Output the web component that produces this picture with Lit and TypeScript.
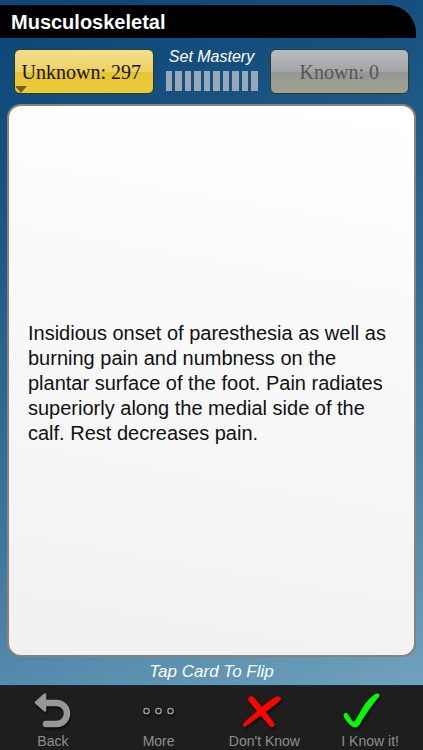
import { LitElement, html, css, svg } from "lit";
import { customElement, property } from "lit/decorators.js";

const backIcon = svg`
  <path d="M7 9.500 L16 1.500 V17.500 Z" fill="#979797" stroke="#979797" stroke-width="2.500" stroke-linejoin="round"/>
  <path d="M15 10 H27.500 A10.500 10.500 0 0 1 27.500 31 H17" fill="none" stroke="#979797" stroke-width="6.500" stroke-linecap="round"/>`;
const moreIcon = svg`
  <g fill="none" stroke="#a0a0a0" stroke-width="1.300">
    <circle cx="11.500" cy="18" r="2.700"/><circle cx="23.500" cy="18" r="2.700"/><circle cx="35.500" cy="18" r="2.700"/>
  </g>`;
const crossIcon = svg`
  <g fill="#fb0500" stroke="#fb0500" stroke-width="1" stroke-linejoin="round">
    <path d="M10 4 C12 3 13 4 14.500 5.500 L23 16 L34 30.500 C35 33 33 34.500 30.500 33.500 L19 20 L9.500 8.500 C8 6.500 8 5 10 4 Z"/>
    <path d="M37 4 C40 3 41.500 5.500 39.500 8 L25 19 L5 33.500 C3 34.500 3 31 4.500 29.500 L19 17 C27 10 32 6 37 4 Z"/>
  </g>`;
const checkIcon = svg`
  <path d="M1.500 20.500 C-1 19 -3.500 21 -2 24 C0 28 4 32.500 7 34 C10 35 12 34 14 31 C19 22 26 12 32 5 C35 2 33 0 31 0.500 C27 1.500 22 7 19 11 C15 17 12 23 9 28 Q7.500 29.500 6 27.500 Z" fill="#08f808"/>`;

@customElement("tab-item")
class TabItem extends LitElement {
  @property() label = "";
  @property({ attribute: false }) icon: unknown;

  static styles = css`
    :host { display: block; flex: 1; }
    button {
      width: 100%;
      display: flex;
      flex-direction: column;
      align-items: center;
      gap: 4px;
      padding: 7px 0 1px;
      border: 0;
      background: none;
      color: #8e8e8e;
      font: 14px/16px "Liberation Sans", Arial, sans-serif;
      white-space: nowrap;
      cursor: pointer;
    }
    svg { display: block; overflow: visible; filter: drop-shadow(1px 2px 1px #000a); }
  `;

  render() {
    return html`<button type="button">
      <svg width="48" height="36" viewBox="0 0 48 36" aria-hidden="true">${this.icon}</svg>
      <span>${this.label}</span>
    </button>`;
  }
}

@customElement("app-root")
class AppRoot extends LitElement {
  static styles = css`
    :host {
      display: flex;
      flex-direction: column;
      min-height: 100vh;
      box-sizing: border-box;
      padding-top: 5px;
      background: linear-gradient(160deg, #0d4677 0%, #15507f 18%, #3f789f 62%, #74a7c0 96%);
      font-family: "Liberation Sans", Arial, sans-serif;
    }
    button { margin: 0; font: inherit; cursor: pointer; }
    header {
      margin-right: 7px;
      padding: 2px 11px 0;
      background: #000;
      border-top-right-radius: 28px;
    }
    h1 { margin: 0; color: #fff; font-size: 20px; line-height: 31px; font-weight: bold; }
    .piles {
      display: grid;
      grid-template-columns: 1fr 92px 1fr;
      gap: 12px;
      padding: 11px 14px 10px;
    }
    .pile {
      position: relative;
      height: 45px;
      padding: 2px 0 0;
      border: 1px solid #2b3a3c;
      border-radius: 6px;
      font-family: Georgia, "Liberation Serif", serif;
      font-size: 20px;
      white-space: nowrap;
      overflow: hidden;
    }
    .unknown {
      color: #161204;
      padding-right: 5px;
      background: linear-gradient(#f4df8b, #ecd163 50%, #e6c533 51%, #eccb38);
    }
    .unknown::after {
      content: "";
      position: absolute;
      left: 0;
      bottom: 0;
      border: 6px solid transparent;
      border-top: 7px solid #756018;
      border-bottom: 0;
    }
    .known {
      color: #565656;
      background: linear-gradient(#b9bbbe, #a3a4a6 50%, #949697 51%, #a2a28e);
    }
    .mastery {
      padding: 0;
      border: 0;
      background: none;
      color: #fff;
      display: flex;
      flex-direction: column;
      align-items: center;
      justify-content: flex-start;
      gap: 6px;
      font-size: 16px;
      line-height: 16px;
      font-style: italic;
      white-space: nowrap;
    }
    .bars { display: flex; gap: 3px; align-self: stretch; height: 20px; }
    .bars i { flex: 1; background: #97a8b7; }
    .card {
      flex: 1;
      margin: 0 7px;
      padding: 6px 19px 0;
      border: 2px solid #8b8178;
      border-radius: 14px;
      background: linear-gradient(190deg, #fff, #f7f7f7 55%, #f0f0f0);
      color: #111;
      text-align: left;
      font-size: 20px;
      line-height: 25px;
    }
    .hint {
      margin: 0;
      padding: 5px 0 3px;
      color: #fff;
      text-align: center;
      font-size: 17px;
      line-height: 20px;
      font-style: italic;
    }
    nav { display: flex; background: #1e1e1e; border-top: 1px solid #142a38; }
  `;

  render() {
    return html`
      <header><h1>Musculoskeletal</h1></header>
      <div class="piles">
        <button type="button" class="pile unknown">Unknown: 297</button>
        <button type="button" class="mastery">
          <span>Set Mastery</span>
          <span class="bars">${Array.from({ length: 10 }, () => html`<i></i>`)}</span>
        </button>
        <button type="button" class="pile known">Known: 0</button>
      </div>
      <button type="button" class="card">
        Insidious onset of paresthesia as well as burning pain and numbness on the plantar surface
        of the foot. Pain radiates superiorly along the medial side of the calf. Rest decreases pain.
      </button>
      <p class="hint">Tap Card To Flip</p>
      <nav>
        <tab-item label="Back" .icon=${backIcon}></tab-item>
        <tab-item label="More" .icon=${moreIcon}></tab-item>
        <tab-item label="Don't Know" .icon=${crossIcon}></tab-item>
        <tab-item label="I Know it!" .icon=${checkIcon}></tab-item>
      </nav>
    `;
  }
}
